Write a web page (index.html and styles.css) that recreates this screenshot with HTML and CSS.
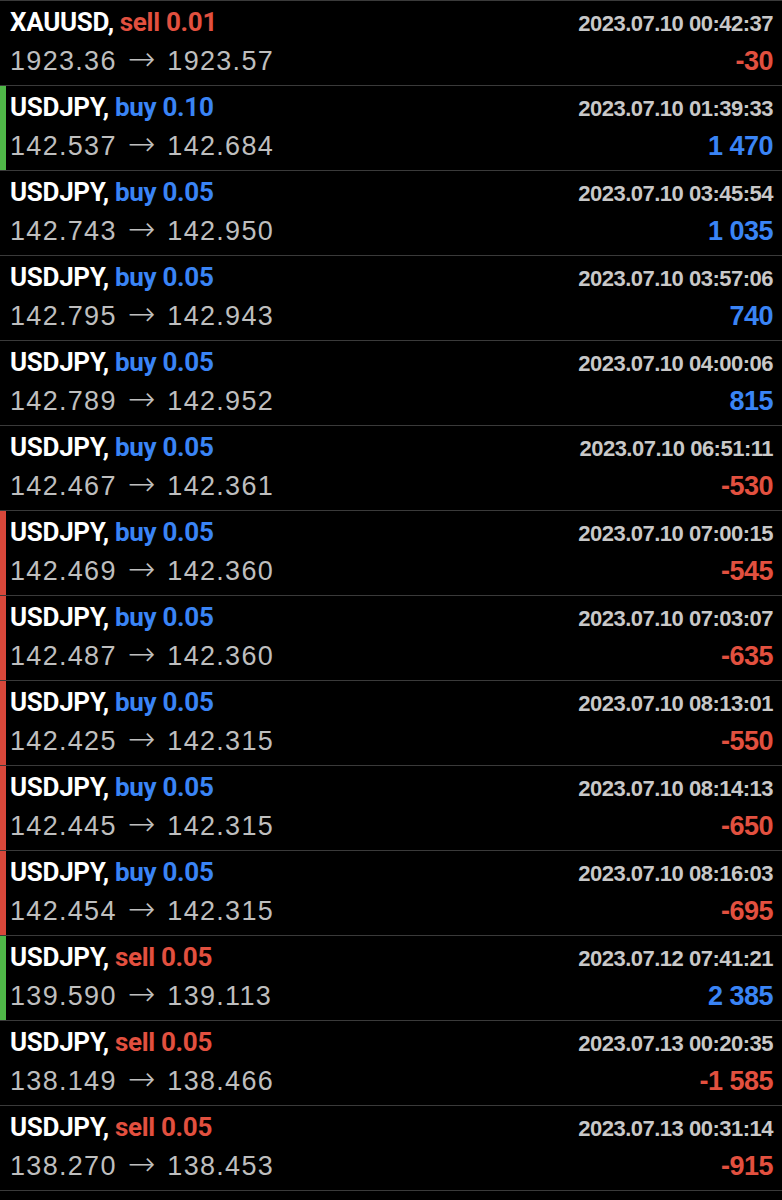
FILE: index.html
```html
<!DOCTYPE html>
<html lang="en">
<head>
    <meta charset="UTF-8">
    <meta name="viewport" content="width=device-width, initial-scale=1.0">
    <title>History</title>
    <link rel="stylesheet" href="styles.css">
</head>
<body>

    <ul class="deals">
        <li class="deal">
            <div class="top"><span class="sym">XAUUSD,</span><span class="type sell">sell 0.01</span><span class="time">2023.07.10 00:42:37</span></div>
            <div class="bottom"><span class="price">1923.36<span class="arrow">→</span>1923.57</span><span class="profit loss">-30</span></div>
        </li>
        <li class="deal mark-green">
            <div class="top"><span class="sym">USDJPY,</span><span class="type buy">buy 0.10</span><span class="time">2023.07.10 01:39:33</span></div>
            <div class="bottom"><span class="price">142.537<span class="arrow">→</span>142.684</span><span class="profit gain">1 470</span></div>
        </li>
        <li class="deal">
            <div class="top"><span class="sym">USDJPY,</span><span class="type buy">buy 0.05</span><span class="time">2023.07.10 03:45:54</span></div>
            <div class="bottom"><span class="price">142.743<span class="arrow">→</span>142.950</span><span class="profit gain">1 035</span></div>
        </li>
        <li class="deal">
            <div class="top"><span class="sym">USDJPY,</span><span class="type buy">buy 0.05</span><span class="time">2023.07.10 03:57:06</span></div>
            <div class="bottom"><span class="price">142.795<span class="arrow">→</span>142.943</span><span class="profit gain">740</span></div>
        </li>
        <li class="deal">
            <div class="top"><span class="sym">USDJPY,</span><span class="type buy">buy 0.05</span><span class="time">2023.07.10 04:00:06</span></div>
            <div class="bottom"><span class="price">142.789<span class="arrow">→</span>142.952</span><span class="profit gain">815</span></div>
        </li>
        <li class="deal">
            <div class="top"><span class="sym">USDJPY,</span><span class="type buy">buy 0.05</span><span class="time">2023.07.10 06:51:11</span></div>
            <div class="bottom"><span class="price">142.467<span class="arrow">→</span>142.361</span><span class="profit loss">-530</span></div>
        </li>
        <li class="deal mark-red">
            <div class="top"><span class="sym">USDJPY,</span><span class="type buy">buy 0.05</span><span class="time">2023.07.10 07:00:15</span></div>
            <div class="bottom"><span class="price">142.469<span class="arrow">→</span>142.360</span><span class="profit loss">-545</span></div>
        </li>
        <li class="deal mark-red">
            <div class="top"><span class="sym">USDJPY,</span><span class="type buy">buy 0.05</span><span class="time">2023.07.10 07:03:07</span></div>
            <div class="bottom"><span class="price">142.487<span class="arrow">→</span>142.360</span><span class="profit loss">-635</span></div>
        </li>
        <li class="deal mark-red">
            <div class="top"><span class="sym">USDJPY,</span><span class="type buy">buy 0.05</span><span class="time">2023.07.10 08:13:01</span></div>
            <div class="bottom"><span class="price">142.425<span class="arrow">→</span>142.315</span><span class="profit loss">-550</span></div>
        </li>
        <li class="deal mark-red">
            <div class="top"><span class="sym">USDJPY,</span><span class="type buy">buy 0.05</span><span class="time">2023.07.10 08:14:13</span></div>
            <div class="bottom"><span class="price">142.445<span class="arrow">→</span>142.315</span><span class="profit loss">-650</span></div>
        </li>
        <li class="deal mark-red">
            <div class="top"><span class="sym">USDJPY,</span><span class="type buy">buy 0.05</span><span class="time">2023.07.10 08:16:03</span></div>
            <div class="bottom"><span class="price">142.454<span class="arrow">→</span>142.315</span><span class="profit loss">-695</span></div>
        </li>
        <li class="deal mark-green">
            <div class="top"><span class="sym">USDJPY,</span><span class="type sell">sell 0.05</span><span class="time">2023.07.12 07:41:21</span></div>
            <div class="bottom"><span class="price">139.590<span class="arrow">→</span>139.113</span><span class="profit gain">2 385</span></div>
        </li>
        <li class="deal">
            <div class="top"><span class="sym">USDJPY,</span><span class="type sell">sell 0.05</span><span class="time">2023.07.13 00:20:35</span></div>
            <div class="bottom"><span class="price">138.149<span class="arrow">→</span>138.466</span><span class="profit loss">-1 585</span></div>
        </li>
        <li class="deal">
            <div class="top"><span class="sym">USDJPY,</span><span class="type sell">sell 0.05</span><span class="time">2023.07.13 00:31:14</span></div>
            <div class="bottom"><span class="price">138.270<span class="arrow">→</span>138.453</span><span class="profit loss">-915</span></div>
        </li>
    </ul>

</body>
</html>
```

FILE: styles.css
```css
body {
    margin: 0;
    background: #000000;
    font-family: "Liberation Sans", Arial, sans-serif;
    color: #c4c4c4;
}

.deals {
    list-style: none;
    margin: 0;
    padding: 0;
    border-bottom: 1px solid #3a3a3a;
}

.deal {
    height: 85px;
    box-sizing: border-box;
    border-top: 1px solid #3a3a3a;
    padding: 6px 9px 0 10px;
}

.mark-green {
    box-shadow: inset 6px 0 0 #4fb848;
}

.mark-red {
    box-shadow: inset 6px 0 0 #d8473a;
}

.top {
    display: flex;
    align-items: baseline;
    line-height: 30px;
}

.sym,
.type {
    font-family: Roboto, sans-serif;
    font-weight: bold;
    font-size: 26px;
    letter-spacing: -0.3px;
}

.sym {
    color: #ffffff;
    margin-right: 6px;
}

.buy,
.gain {
    color: #3a84f5;
}

.sell,
.loss {
    color: #e2503f;
}

.time {
    margin-left: auto;
    font-weight: bold;
    font-size: 22px;
    letter-spacing: -0.5px;
    color: #c8c8c8;
}

.bottom {
    display: flex;
    align-items: flex-start;
    margin-top: 5px;
    line-height: 30px;
}

.price {
    font-size: 27px;
    letter-spacing: 1.3px;
    color: #bebebe;
}

.arrow {
    font-family: "DejaVu Sans", sans-serif;
    font-weight: 200;
    font-size: 33px;
    letter-spacing: 0;
    margin: 0 12px 0 11px;
}

.profit {
    margin-left: auto;
    margin-top: 2px;
    font-weight: bold;
    font-size: 27px;
    letter-spacing: -0.5px;
}
```
